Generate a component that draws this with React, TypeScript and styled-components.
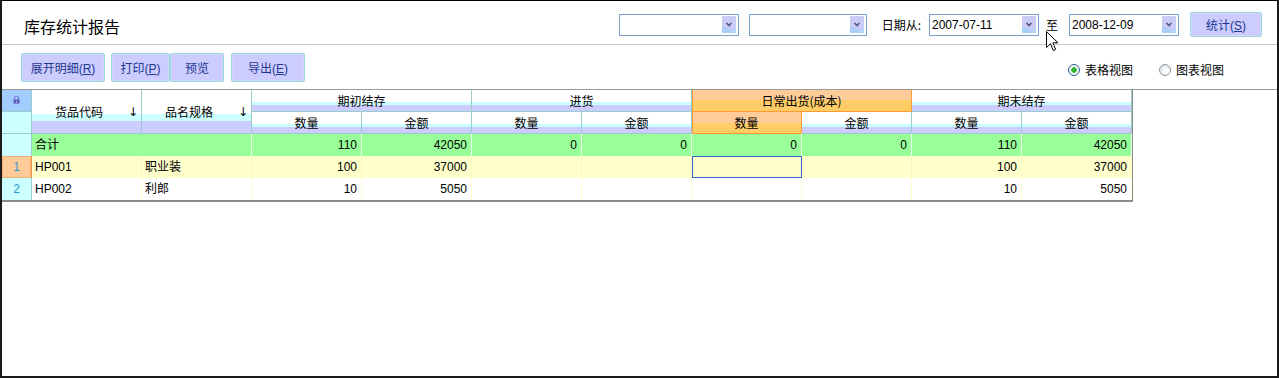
import React from "react";
import styled, { createGlobalStyle, css } from "styled-components";

const GlobalStyle = createGlobalStyle`
  html, body { margin: 0; padding: 0; background: #fff; }
  body {
    font-family: "Liberation Sans", "Noto Sans CJK SC", sans-serif;
    font-size: 12px;
    color: #000;
  }
`;

const Frame = styled.div`
  position: relative;
  width: 1279px;
  height: 378px;
  box-sizing: border-box;
  border-top: 1px solid #000;
  border-left: 2px solid #1a1a1a;
  border-right: 2px solid #1a1a1a;
  border-bottom: 2px solid #1a1a1a;
  background: #fff;
  overflow: hidden;
`;

const TitleBar = styled.div`
  display: flex;
  align-items: center;
  height: 44px;
  box-sizing: border-box;
  padding: 4px 15px 0 22px;
  border-bottom: 1px solid #c8c8c8;
`;

const Title = styled.div`
  font-family: "Noto Sans CJK SC", sans-serif;
  font-size: 16px;
  margin-top: 2px;
`;

const Controls = styled.div`
  margin-left: auto;
  display: flex;
  align-items: center;
`;

const Combo = styled.div<{ $w: number; $gap?: number }>`
  width: ${(p) => p.$w}px;
  height: 22px;
  margin-left: ${(p) => p.$gap ?? 0}px;
  box-sizing: border-box;
  border: 1px solid #7a9fd0;
  background: #fff;
  display: flex;
  align-items: center;
  padding: 0 2px 0 2px;
`;

const ComboText = styled.span`
  flex: 1;
  font-size: 12px;
`;

const Label = styled.span<{ $l: number; $r: number }>`
  margin: 0 ${(p) => p.$r}px 0 ${(p) => p.$l}px;
  font-family: "Noto Sans CJK SC", sans-serif;
  font-size: 12px;
`;

const Btn = styled.button<{ $w: number; $h?: number; $gap?: number }>`
  width: ${(p) => p.$w}px;
  height: ${(p) => p.$h ?? 29}px;
  margin: 0 0 0 ${(p) => p.$gap ?? 0}px;
  padding: 0;
  box-sizing: border-box;
  border: 1px solid #98dada;
  border-radius: 2px;
  box-shadow: inset 0 0 0 1px #d4d4ff;
  background: #ccccff;
  color: #1f3890;
  font-family: "Liberation Sans", "Noto Sans CJK SC", sans-serif;
  font-size: 12px;
  cursor: default;
`;

const Toolbar = styled.div`
  display: flex;
  align-items: center;
  height: 45px;
  box-sizing: border-box;
  padding: 0 53px 0 19px;
  border-bottom: 1px solid #9a9a9a;
`;

const Radios = styled.div`
  margin-left: auto;
  margin-top: 5px;
  display: flex;
  align-items: center;
`;

const RadioItem = styled.label<{ $gap?: number }>`
  display: flex;
  align-items: center;
  gap: 5px;
  margin-left: ${(p) => p.$gap ?? 0}px;
  font-family: "Noto Sans CJK SC", sans-serif;
  font-size: 12px;
`;

const RadioDot = styled.span<{ $on?: boolean }>`
  width: 12px;
  height: 12px;
  border-radius: 50%;
  box-sizing: border-box;
  border: 1px solid ${(p) => (p.$on ? "#2f5f86" : "#8c9aa6")};
  background: ${(p) =>
    p.$on
      ? "radial-gradient(circle, #2fb42f 0 2.5px, #f4f4f4 3px, #ffffff 100%)"
      : "radial-gradient(circle at 65% 65%, #ffffff 25%, #cdd4da 100%)"};
`;

const headBg =
  "linear-gradient(to bottom, #ffffff 0%, #ffffff 55%, #ccffff 55%, #ccffff 72%, #ccccff 72%, #ccccff 100%)";
const hotBg =
  "linear-gradient(to bottom, #ffcc99 0%, #ffcc99 50%, #ffcc66 50%, #ffcc66 100%)";

const Grid = styled.div`
  display: grid;
  grid-template-columns: 30px repeat(10, 110px);
  grid-auto-rows: 22px;
  width: 1131px;
  box-sizing: border-box;
  border-right: 1px solid #8c8c8c;
  border-bottom: 2px solid #8c8c8c;
`;

const Head = styled.div<{ $hot?: boolean; $cs?: number; $rs?: number }>`
  grid-column: span ${(p) => p.$cs ?? 1};
  grid-row: span ${(p) => p.$rs ?? 1};
  box-sizing: border-box;
  display: flex;
  align-items: center;
  font-family: "Noto Sans CJK SC", sans-serif;
  font-size: 12px;
  border-right: 1px solid #99cccc;
  border-bottom: 1px solid #99cccc;
  background: ${headBg};
  ${(p) =>
    p.$hot &&
    css`
      background: ${hotBg};
      border-right-color: #ff9933;
      border-bottom-color: #ff9933;
      box-shadow: inset 1px 0 0 #ff9933;
    `}
`;

const HeadText = styled.span`
  flex: 1;
  text-align: center;
`;

const SortMark = styled.span`
  width: 12px;
  padding-right: 3px;
  font-family: "DejaVu Sans", sans-serif;
  font-size: 12px;
  text-align: right;
`;

const Corner = styled.div<{ $top?: boolean }>`
  box-sizing: border-box;
  display: flex;
  justify-content: center;
  padding-top: 6px;
  background: ${(p) => (p.$top ? "#a0ccff" : "#ccffff")};
  border-right: 1px solid #99cccc;
  border-bottom: 1px solid #99cccc;
`;

const RowHead = styled.div<{ $active?: boolean }>`
  box-sizing: border-box;
  display: flex;
  align-items: center;
  justify-content: center;
  color: #2f97cf;
  font-size: 12px;
  background: ${(p) => (p.$active ? "#ffcc99" : "#ccffff")};
  border-right: 1px solid ${(p) => (p.$active ? "#f29a4a" : "#99cccc")};
  ${(p) => p.$active && "box-shadow: inset 0 0 0 1px #f7b070;"}
`;

type Tone = "sum" | "odd" | "even";
const toneBg: Record<Tone, string> = { sum: "#99ff99", odd: "#ffffcc", even: "#ffffff" };
const toneLine: Record<Tone, string> = { sum: "#eaffea", odd: "#f7f7c4", even: "#ffffcc" };

const Cell = styled.div<{
  $tone: Tone;
  $num?: boolean;
  $sel?: boolean;
  $cs?: number;
  $cjk?: boolean;
}>`
  grid-column: span ${(p) => p.$cs ?? 1};
  box-sizing: border-box;
  display: flex;
  align-items: center;
  justify-content: ${(p) => (p.$num ? "flex-end" : "flex-start")};
  padding: 0 4px ${(p) => (p.$cjk ? 3 : 0)}px 3px;
  font-family: ${(p) =>
    p.$cjk
      ? `"Noto Sans CJK SC", sans-serif`
      : `"Liberation Sans", "Noto Sans CJK SC", sans-serif`};
  font-size: 12px;
  background: ${(p) => toneBg[p.$tone]};
  border-right: 1px solid ${(p) => toneLine[p.$tone]};
  ${(p) =>
    p.$sel &&
    css`
      outline: 1px solid #3366cc;
      outline-offset: -1px;
    `}
`;

const Pointer = styled.svg`
  position: absolute;
  left: 1044px;
  top: 30px;
`;

const ComboArrow = () => (
  <svg width="14" height="17" viewBox="0 0 14 17">
    <rect width="14" height="17" fill="#cbcbf7" />
    <path d="M0 10 Q5 13 8 13 L9 17 L0 17 Z" fill="#a6cff7" />
    <path d="M10 14 L14 12 L14 17 L9 17 Z" fill="#b4d6f8" />
    <path d="M4.5 7 L7 9.5 L9.5 7" fill="none" stroke="#545480" strokeWidth="1.6" />
  </svg>
);

const Lock = () => (
  <svg width="7" height="8" viewBox="0 0 7 8">
    <path d="M1.5 3.5 V2 a2 2 0 0 1 4 0 V3.5" fill="none" stroke="#6a6ac8" strokeWidth="1" />
    <rect x="0.5" y="3.5" width="6" height="4" fill="#5a5ab8" />
    <rect x="3" y="5" width="1" height="1.5" fill="#c8c8ff" />
  </svg>
);

const groups = ["期初结存", "进货", "日常出货(成本)", "期末结存"];
const hotGroup = 2;
const sums = [110, 42050, 0, 0, 0, 0, 110, 42050];
const rows = [
  { code: "HP001", name: "职业装", vals: [100, 37000, "", "", "", "", 100, 37000] },
  { code: "HP002", name: "利郎", vals: [10, 5050, "", "", "", "", 10, 5050] },
];
const selected = { row: 0, col: 4 };

export default function App() {
  return (
    <>
      <GlobalStyle />
      <Frame>
        <TitleBar>
          <Title>库存统计报告</Title>
          <Controls>
            <Combo $w={120}>
              <ComboText />
              <ComboArrow />
            </Combo>
            <Combo $w={118} $gap={10}>
              <ComboText />
              <ComboArrow />
            </Combo>
            <Label $l={15} $r={8}>日期从:</Label>
            <Combo $w={110}>
              <ComboText>2007-07-11</ComboText>
              <ComboArrow />
            </Combo>
            <Label $l={7} $r={11}>至</Label>
            <Combo $w={110}>
              <ComboText>2008-12-09</ComboText>
              <ComboArrow />
            </Combo>
            <Btn $w={72} $h={25} $gap={11}>
              统计(<u>S</u>)
            </Btn>
          </Controls>
        </TitleBar>

        <Toolbar>
          <Btn $w={84}>
            展开明细(<u>R</u>)
          </Btn>
          <Btn $w={59} $gap={6}>
            打印(<u>P</u>)
          </Btn>
          <Btn $w={54}>预览</Btn>
          <Btn $w={74} $gap={7}>
            导出(<u>E</u>)
          </Btn>
          <Radios>
            <RadioItem>
              <RadioDot $on />
              表格视图
            </RadioItem>
            <RadioItem $gap={26}>
              <RadioDot />
              图表视图
            </RadioItem>
          </Radios>
        </Toolbar>

        <Grid>
          <Corner $top>
            <Lock />
          </Corner>
          <Head $rs={2}>
            <HeadText>货品代码</HeadText>
            <SortMark>↓</SortMark>
          </Head>
          <Head $rs={2}>
            <HeadText>品名规格</HeadText>
            <SortMark>↓</SortMark>
          </Head>
          {groups.map((g, i) => (
            <Head key={g} $cs={2} $hot={i === hotGroup}>
              <HeadText>{g}</HeadText>
            </Head>
          ))}
          <Corner />
          {groups.map((g, i) => (
            <React.Fragment key={g + "-sub"}>
              <Head $hot={i === hotGroup}>
                <HeadText>数量</HeadText>
              </Head>
              <Head>
                <HeadText>金额</HeadText>
              </Head>
            </React.Fragment>
          ))}

          <RowHead />
          <Cell $tone="sum" $cs={2} $cjk>
            合计
          </Cell>
          {sums.map((v, i) => (
            <Cell key={"s" + i} $tone="sum" $num>
              {v}
            </Cell>
          ))}

          {rows.map((r, ri) => {
            const tone: Tone = ri % 2 === 0 ? "odd" : "even";
            return (
              <React.Fragment key={r.code}>
                <RowHead $active={ri === selected.row}>{ri + 1}</RowHead>
                <Cell $tone={tone}>{r.code}</Cell>
                <Cell $tone={tone} $cjk>
                  {r.name}
                </Cell>
                {r.vals.map((v, ci) => (
                  <Cell
                    key={r.code + ci}
                    $tone={tone}
                    $num
                    $sel={ri === selected.row && ci === selected.col}
                  >
                    {v}
                  </Cell>
                ))}
              </React.Fragment>
            );
          })}
        </Grid>

        <Pointer width="13" height="21" viewBox="0 0 13 21">
          <path
            d="M0.5 0.5 L0.5 16.5 L4.5 12.7 L7.3 19.5 L9.6 18.5 L6.9 11.8 L12 11.8 Z"
            fill="#fff"
            stroke="#000"
            strokeWidth="1"
          />
        </Pointer>
      </Frame>
    </>
  );
}
